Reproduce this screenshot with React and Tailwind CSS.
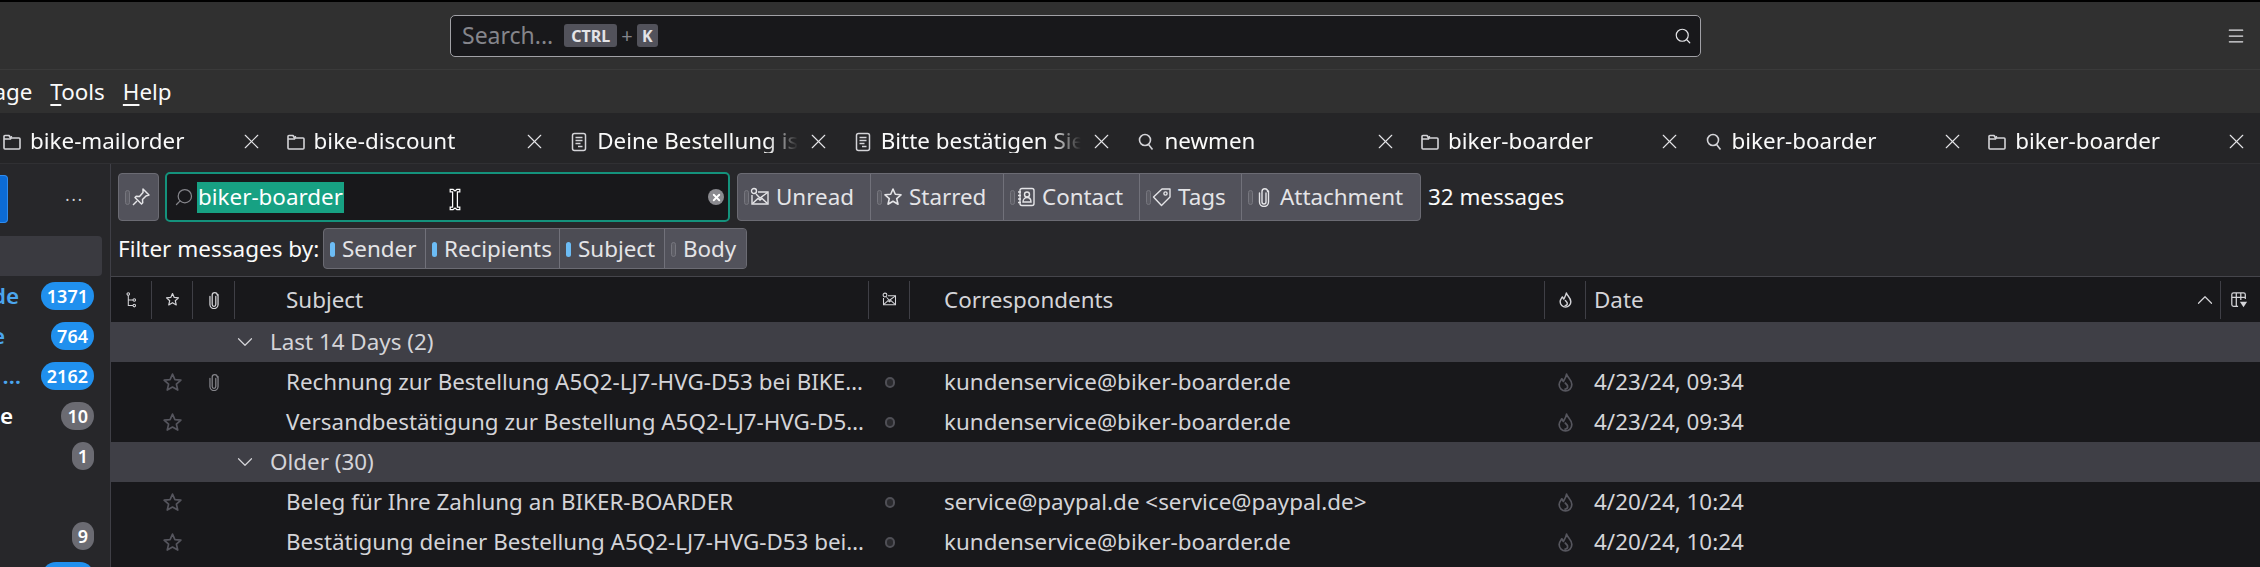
import { ChevronDown, ChevronUp, Menu, Search, X } from "lucide-react"

const tabs = [
  { icon: "folder", title: "bike-mailorder" },
  { icon: "folder", title: "bike-discount" },
  { icon: "doc", title: "Deine Bestellung ist" },
  { icon: "doc", title: "Bitte bestätigen Sie" },
  { icon: "search", title: "newmen" },
  { icon: "folder", title: "biker-boarder" },
  { icon: "search", title: "biker-boarder" },
  { icon: "folder", title: "biker-boarder" },
]

const folders = [
  { text: "de", textWidth: "w-[19px]", color: "text-[#4ba6ee]", count: "1371", blue: true },
  { text: "e", textWidth: "w-[5px]", color: "text-[#4ba6ee]", count: "764", blue: true },
  { text: "…", textWidth: "w-[21px]", color: "text-[#4ba6ee]", count: "2162", blue: true },
  { text: "e", textWidth: "w-[13px]", color: "text-white", count: "10" },
  { text: "", textWidth: "w-[5px]", color: "", count: "1" },
  { text: "", textWidth: "w-[5px]", color: "", count: "" },
  { text: "", textWidth: "w-[5px]", color: "", count: "9" },
  { text: "", textWidth: "w-[5px]", color: "", count: "88", blue: true },
]

const rowGrid = "grid grid-cols-[41px_41px_42px_634px_41px_635px_41px_635px_40px] items-center"

const groups = [
  {
    label: "Last 14 Days (2)",
    rows: [
      {
        subject: "Rechnung zur Bestellung A5Q2-LJ7-HVG-D53 bei BIKER-BOARDER",
        from: "kundenservice@biker-boarder.de",
        date: "4/23/24, 09:34",
        attachment: true,
      },
      {
        subject: "Versandbestätigung zur Bestellung A5Q2-LJ7-HVG-D53 bei BIKER-BOARDER",
        from: "kundenservice@biker-boarder.de",
        date: "4/23/24, 09:34",
      },
    ],
  },
  {
    label: "Older (30)",
    rows: [
      {
        subject: "Beleg für Ihre Zahlung an BIKER-BOARDER",
        from: "service@paypal.de <service@paypal.de>",
        date: "4/20/24, 10:24",
      },
      {
        subject: "Bestätigung deiner Bestellung A5Q2-LJ7-HVG-D53 bei BIKER-BOARDER",
        from: "kundenservice@biker-boarder.de",
        date: "4/20/24, 10:24",
      },
    ],
  },
]

const StarIcon = ({ className }) => (
  <svg viewBox="0 0 20 20" fill="none" stroke="currentColor" strokeWidth="1.6" strokeLinejoin="round" className={className}>
    <path d="M10 2l2.3 5.2 5.7.6-4.3 3.8 1.3 5.6-5-2.9-5 2.9 1.3-5.6L2 7.8l5.7-.6z" />
  </svg>
)

const FolderIcon = () => (
  <svg viewBox="0 0 20 20" fill="none" stroke="#d4d4d8" strokeWidth="1.6" strokeLinejoin="round" className="w-5 h-5 shrink-0">
    <path d="M2 4.5a1 1 0 011-1h4l1.5 2.5H17a1 1 0 011 1v9a1 1 0 01-1 1H3a1 1 0 01-1-1z" />
    <path d="M2 7h6.5l1-3" />
  </svg>
)

const DocIcon = () => (
  <svg viewBox="0 0 20 20" fill="none" stroke="#d4d4d8" strokeWidth="1.5" className="w-5 h-5 shrink-0">
    <rect x="3.5" y="1.5" width="13" height="17" rx="2" />
    <path d="M6.5 5.5h7M6.5 8.5h7M6.5 11.5h5M9 14.5h4.5" />
  </svg>
)

const TabSearchIcon = () => (
  <svg viewBox="0 0 20 20" fill="none" stroke="#d4d4d8" strokeWidth="1.6" className="w-5 h-5 shrink-0">
    <circle cx="9" cy="8" r="5.5" />
    <path d="M12.5 12.5l4 5" />
  </svg>
)

const PinIcon = () => (
  <svg viewBox="0 0 20 20" fill="none" stroke="#e4e4e7" strokeWidth="1.5" strokeLinejoin="round" className="w-5 h-5">
    <path d="M12 2l6 6-3 1-3.5 3.5.2 3.3-1.2 1.2-6.5-6.5 1.2-1.2 3.3.2L12 5.5z" />
    <path d="M6 14l-4 4" />
  </svg>
)

const MailIcon = ({ className }) => (
  <svg viewBox="0 0 20 20" fill="none" stroke="currentColor" strokeWidth="1.4" className={className}>
    <circle cx="4" cy="4" r="2.5" />
    <path d="M8 5h10v12H2V8" />
    <path d="M2.5 16.5l5.5-5 2 1.5 2-1.5 5.5 5M6 7l4 4 7.5-5.5" />
  </svg>
)

const ContactIcon = () => (
  <svg viewBox="0 0 20 20" fill="none" stroke="#e4e4e7" strokeWidth="1.4" className="w-5 h-5">
    <rect x="4" y="1.5" width="14" height="17" rx="2" />
    <path d="M2 5h3M2 8.5h3M2 12h3M2 15.5h3" />
    <circle cx="11" cy="7.5" r="2.5" />
    <path d="M7 15c0-6 8-6 8 0z" />
  </svg>
)

const TagIcon = () => (
  <svg viewBox="0 0 20 20" fill="none" stroke="#e4e4e7" strokeWidth="1.4" strokeLinejoin="round" className="w-5 h-5">
    <path d="M18 2v8l-8.5 8.5L1.5 10 10 2z" />
    <circle cx="13.5" cy="6.5" r="1.6" />
  </svg>
)

const ClipIcon = ({ className }) => (
  <svg viewBox="0 0 12 20" fill="none" stroke="currentColor" strokeWidth="1.4" strokeLinecap="round" className={className}>
    <path d="M8 6v9a2 2 0 01-4 0V4.500a2.800 2.800 0 015.600 0 M1.500 6v9a4.500 4.500 0 009 0V4" />
  </svg>
)

const ThreadIcon = () => (
  <svg viewBox="0 0 14 20" fill="none" stroke="#d4d4d8" strokeWidth="1.3" className="w-[13px] h-[16px]">
    <circle cx="3" cy="2.500" r="1.600" />
    <circle cx="10.500" cy="10" r="1.600" />
    <circle cx="10.500" cy="17" r="1.600" />
    <path d="M3 4v13h6M3 10h6" />
  </svg>
)

const FlameIcon = ({ className }) => (
  <svg viewBox="0 0 14 18" fill="none" stroke="currentColor" strokeWidth="1.600" strokeLinejoin="round" className={className}>
    <path d="M8 1c.5 3 5 5 5 10a6 6 0 01-6 6 6 6 0 01-6-6c0-2.500 1.500-4 2.500-5.500L5 8c1-2 2.500-4 3-7z" />
    <path d="M6.500 9c1 2 3 2 2.500 4.500-.3 1.500-2 2-3 1.500" />
  </svg>
)

const ColumnsIcon = () => (
  <svg viewBox="0 0 20 20" fill="none" stroke="#d4d4d8" strokeWidth="1.400" className="w-[18px] h-[18px]">
    <path d="M9 17H4a2 2 0 01-2-2V4a2 2 0 012-2h11a2 2 0 012 2v5M2 7h15M7 2v15M12 2v8" />
    <path d="M11 12h8l-4 6z" fill="#d4d4d8" stroke="none" />
  </svg>
)

const IBeam = () => (
  <svg viewBox="0 0 12 24" className="w-[12px] h-[23px]">
    <path
      d="M1 1.500h3l2 1.500 2-1.500h3v2.500H8.500v16H11v2.500H8l-2-1.500-2 1.500H1V20h2.500V4H1z"
      fill="#111"
      stroke="#fff"
      strokeWidth="1.300"
    />
  </svg>
)

const Pill = ({ on }) => (
  <span
    className={
      on
        ? "w-[5px] h-[15px] shrink-0 rounded-full bg-[#6cbcf5]"
        : "w-[5px] h-[15px] shrink-0 rounded-full bg-[#5d5d65] border border-[#76767e]"
    }
  />
)

const quickFilters = [
  { label: "Unread", width: "w-[132px]", icon: <MailIcon className="w-5 h-5 text-[#e4e4e7]" /> },
  { label: "Starred", width: "w-[133px]", icon: <StarIcon className="w-5 h-5 text-[#e4e4e7]" /> },
  { label: "Contact", width: "w-[136px]", icon: <ContactIcon /> },
  { label: "Tags", width: "w-[102px]", icon: <TagIcon /> },
  { label: "Attachment", width: "w-[179px]", icon: <ClipIcon className="w-5 h-5 text-[#e4e4e7]" /> },
]

const filterBy = [
  { label: "Sender", width: "w-[101px]", on: true },
  { label: "Recipients", width: "w-[134px]", on: true },
  { label: "Subject", width: "w-[105px]", on: true },
  { label: "Body", width: "w-[82px]", on: false },
]

const HeaderCell = ({ children, className = "", last = false }) => (
  <div className={`h-[38px] flex items-center ${last ? "" : "border-r border-[#3f3f46]"} ${className}`}>{children}</div>
)

const App = () => {
  return (
    <div className="w-[2260px] h-[567px] overflow-hidden bg-[#27272a] text-[22.4px] leading-none text-[#fafafa] font-['Noto_Sans',sans-serif] flex flex-col">
      <div className="h-[2px] bg-black shrink-0" />

      {/* Title bar */}
      <div className="h-[68px] shrink-0 bg-[#303030] border-b border-[#3a3a3a] flex items-center pl-[450px] pr-[14px]">
        <div className="w-[1251px] h-[42px] bg-[#18181b] border border-[#a1a1a6] rounded-[5px] flex items-center pl-[11px] pr-[8px]">
          <span className="text-[#85858b] text-[23px]">Search...</span>
          <span className="ml-[11px] h-[23px] w-[53px] rounded-[3px] bg-[#52525b] text-[#e4e4e7] text-[16px] font-bold flex items-center justify-center">
            CTRL
          </span>
          <span className="mx-[4px] text-[#85858b] text-[20px]">+</span>
          <span className="h-[23px] w-[21px] rounded-[3px] bg-[#52525b] text-[#e4e4e7] text-[16px] font-bold flex items-center justify-center">
            K
          </span>
          <Search className="ml-auto w-[18px] h-[18px] text-[#e4e4e7]" strokeWidth={1.6} />
        </div>
        <Menu className="ml-auto w-[20px] h-[20px] text-[#e4e4e7]" strokeWidth={1.5} />
      </div>

      {/* Menu bar */}
      <div className="h-[43px] shrink-0 bg-[#303030] flex items-center gap-[18px] pt-[2px] overflow-hidden">
        <span className="-ml-[61px]">Message</span>
        <span>
          <span className="underline underline-offset-4">T</span>ools
        </span>
        <span>
          <span className="underline underline-offset-4">H</span>elp
        </span>
      </div>

      {/* Tabs */}
      <div className="h-[51px] shrink-0 bg-[#252527] border-b border-[#303033] flex items-center pt-[7px] -ml-[9px]">
        {tabs.map((tab, i) => (
          <div key={i} className="w-[283.6px] shrink-0 flex items-center pl-[11px] pr-[11px] gap-[8px]">
            {tab.icon === "folder" && <FolderIcon />}
            {tab.icon === "doc" && <DocIcon />}
            {tab.icon === "search" && <TabSearchIcon />}
            <span className="flex-1 overflow-hidden whitespace-nowrap [mask-image:linear-gradient(to_left,transparent,black_30px)]">
              {tab.title}
            </span>
            <X className="w-[25px] h-[25px] shrink-0 text-[#e4e4e7]" strokeWidth={1.1} />
          </div>
        ))}
      </div>

      <div className="flex flex-1 min-h-0">
        {/* Sidebar */}
        <div className="w-[111px] shrink-0 border-r border-[#3f3f46] flex flex-col">
          <div className="h-[72px] shrink-0 flex items-center justify-between pr-[26px] pb-[2px]">
            <div className="w-[8px] h-[48px] rounded-r-[4px] bg-[#0b6bd6] border border-[#2f8bee] border-l-0" />
            <span className="text-[#d4d4d8] tracking-[2px] text-[16px] -mt-[8px]">...</span>
          </div>
          <div className="h-[40px] shrink-0 w-[102px] bg-[#3a3a40] rounded-r-[4px]" />
          {folders.map((folder, i) => (
            <div key={i} className="h-[40px] shrink-0 flex items-center justify-between pr-[16px]">
              <div className={`${folder.textWidth} flex justify-end overflow-hidden font-semibold whitespace-nowrap ${folder.color}`}>
                {folder.text}
              </div>
              {folder.count && (
                <span
                  className={`h-[28px] min-w-[21px] px-[6px] rounded-full flex items-center justify-center text-white text-[18px] font-semibold ${
                    folder.blue ? "bg-[#2090ee]" : "bg-[#6b6b72]"
                  } ${folder.count.length === 1 ? "px-0" : ""} ${folder.count === "88" ? "w-[52px]" : ""}`}
                >
                  {folder.count === "88" ? "" : folder.count}
                </span>
              )}
            </div>
          ))}
        </div>

        <div className="flex-1 min-w-0 flex flex-col">
          {/* Quick filter bar */}
          <div className="h-[112px] shrink-0 relative pl-[7px] pt-[9px]">
            <div className="flex h-[48px] items-stretch">
              <div className="w-[41px] mr-[6px] rounded-[4px] bg-[#52525b] border border-[#6b6b73] flex items-center pl-[6px] gap-[1px]">
                <Pill on={false} />
                <PinIcon />
              </div>
              <div className="w-[565px] -my-[1px] mr-[7px] rounded-[5px] bg-[#18181b] border-2 border-[#14927c] flex items-center pl-[7px] pr-[4px]">
                <Search className="w-[20px] h-[20px] -scale-x-100 text-[#85858b] shrink-0" strokeWidth={1.5} />
                <span className="ml-[3px] h-[31px] px-[1px] bg-[#17a183] text-white flex items-center">biker-boarder</span>
                <span className="ml-auto w-[16px] h-[16px] rounded-full bg-[#8a8a8f] flex items-center justify-center">
                  <X className="w-[11px] h-[11px] text-white" strokeWidth={4} />
                </span>
              </div>
              <div className="flex rounded-[4px] bg-[#52525b] border border-[#6b6b73] overflow-hidden">
                {quickFilters.map((f, i) => (
                  <div
                    key={f.label}
                    className={`${f.width} flex items-center pl-[6px] gap-[1px] text-[#e4e4e7] ${i > 0 ? "border-l border-[#71717a]" : ""}`}
                  >
                    <Pill on={false} />
                    {f.icon}
                    <span className="ml-[5px]">{f.label}</span>
                  </div>
                ))}
              </div>
              <span className="ml-[7px] self-center">32 messages</span>
            </div>
            <div className="flex items-center mt-[7px] h-[41px]">
              <span className="w-[205px] shrink-0 whitespace-nowrap pt-[2px] text-[22.500px]">Filter messages by:</span>
              <div className="flex h-[41px] rounded-[4px] bg-[#4c4c54] border border-[#6b6b73] overflow-hidden">
                {filterBy.map((f, i) => (
                  <div
                    key={f.label}
                    className={`${f.width} flex items-center pl-[6px] pt-[2px] gap-[7px] text-[#e4e4e7] ${i > 0 ? "border-l border-[#71717a]" : ""} ${f.on ? "" : "bg-[#52525b]"}`}
                  >
                    <Pill on={f.on} />
                    <span>{f.label}</span>
                  </div>
                ))}
              </div>
            </div>
            {/* Mouse cursor over the search box */}
            <div className="absolute left-[338px] top-[24px]">
              <IBeam />
            </div>
          </div>

          {/* Message list */}
          <div className="flex-1 bg-[#18181b] border-t border-[#45454b] text-[#d4d4d8]">
            <div className={`${rowGrid} h-[45px]`}>
              <HeaderCell className="justify-center"><ThreadIcon /></HeaderCell>
              <HeaderCell className="justify-center"><StarIcon className="w-[15px] h-[15px]" /></HeaderCell>
              <HeaderCell className="justify-center"><ClipIcon className="w-[12px] h-[18px]" /></HeaderCell>
              <HeaderCell className="pl-[51px] pt-[2px]">Subject</HeaderCell>
              <HeaderCell className="justify-center"><MailIcon className="w-[15px] h-[15px]" /></HeaderCell>
              <HeaderCell className="pl-[34px] pt-[2px]">Correspondents</HeaderCell>
              <HeaderCell className="justify-center"><FlameIcon className="w-[13px] h-[16px]" /></HeaderCell>
              <HeaderCell className="pl-[8px] pr-[2px] justify-between">
                <span className="pt-[2px]">Date</span>
                <ChevronUp className="w-[26px] h-[26px]" strokeWidth={1.1} />
              </HeaderCell>
              <HeaderCell className="justify-center pr-[5px]" last><ColumnsIcon /></HeaderCell>
            </div>
            {groups.map((group) => (
              <div key={group.label}>
                <div className="h-[40px] bg-[#3f3f46] flex items-center pl-[121px]">
                  <ChevronDown className="w-[26px] h-[26px]" strokeWidth={1.1} />
                  <span className="ml-[12px]">{group.label}</span>
                </div>
                {group.rows.map((row) => (
                  <div key={row.subject + row.date} className={`${rowGrid} h-[40px]`}>
                    <span />
                    <div className="flex justify-center">
                      <StarIcon className="w-[21px] h-[21px] text-[#56565e]" />
                    </div>
                    <div className="flex justify-center">
                      {row.attachment && <ClipIcon className="w-[12px] h-[18px] text-[#85858b]" />}
                    </div>
                    <div className="pl-[51px] pr-[3px] truncate leading-[40px]">{row.subject}</div>
                    <div className="flex justify-center">
                      <span className="w-[10px] h-[11px] rounded-full border-2 border-[#4f4f56] bg-[#2a2a2e]" />
                    </div>
                    <div className="pl-[34px] truncate leading-[40px]">{row.from}</div>
                    <div className="flex justify-center">
                      <FlameIcon className="w-[15px] h-[19px] text-[#56565e]" />
                    </div>
                    <div className="pl-[8px] truncate leading-[40px]">{row.date}</div>
                    <span />
                  </div>
                ))}
              </div>
            ))}
          </div>
        </div>
      </div>
    </div>
  )
}

export default App
